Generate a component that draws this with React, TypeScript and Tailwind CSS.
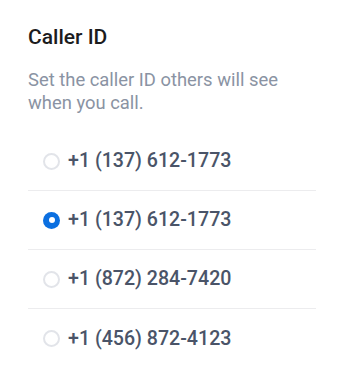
import { useState } from 'react';

const numbers = [
  '+1 (137) 612-1773',
  '+1 (137) 612-1773',
  '+1 (872) 284-7420',
  '+1 (456) 872-4123',
];

export default function App() {
  const [selected, setSelected] = useState(1);

  return (
    <div
      className="min-h-screen bg-white px-[28px] pt-[23px]"
      style={{ fontFamily: 'Roboto, "Liberation Sans", sans-serif' }}
    >
      <h2 className="text-[21px] leading-[28px] font-medium text-[#1c1c1e]">Caller ID</h2>
      <p className="mt-[17px] text-[18.4px] leading-[23px] text-[#8a93a3]">
        Set the caller ID others will see when you call.
      </p>

      <div className="mt-[18px]">
        {numbers.map((num, i) => (
          <label
            key={i}
            onClick={() => setSelected(i)}
            className={`flex h-[59px] cursor-pointer items-center pl-[15px] ${
              i < numbers.length - 1 ? 'border-b border-[#ececee]' : ''
            }`}
          >
            {selected === i ? (
              <span className="flex h-[17px] w-[17px] items-center justify-center rounded-full bg-[#0b6fe0]">
                <span className="h-[6px] w-[6px] rounded-full bg-white" />
              </span>
            ) : (
              <span className="h-[17px] w-[17px] rounded-full border-2 border-[#e2e4e9]" />
            )}
            <span className="ml-[8px] text-[19.6px] leading-[28px] font-medium text-[#4a5468]">{num}</span>
          </label>
        ))}
      </div>
    </div>
  );
}
